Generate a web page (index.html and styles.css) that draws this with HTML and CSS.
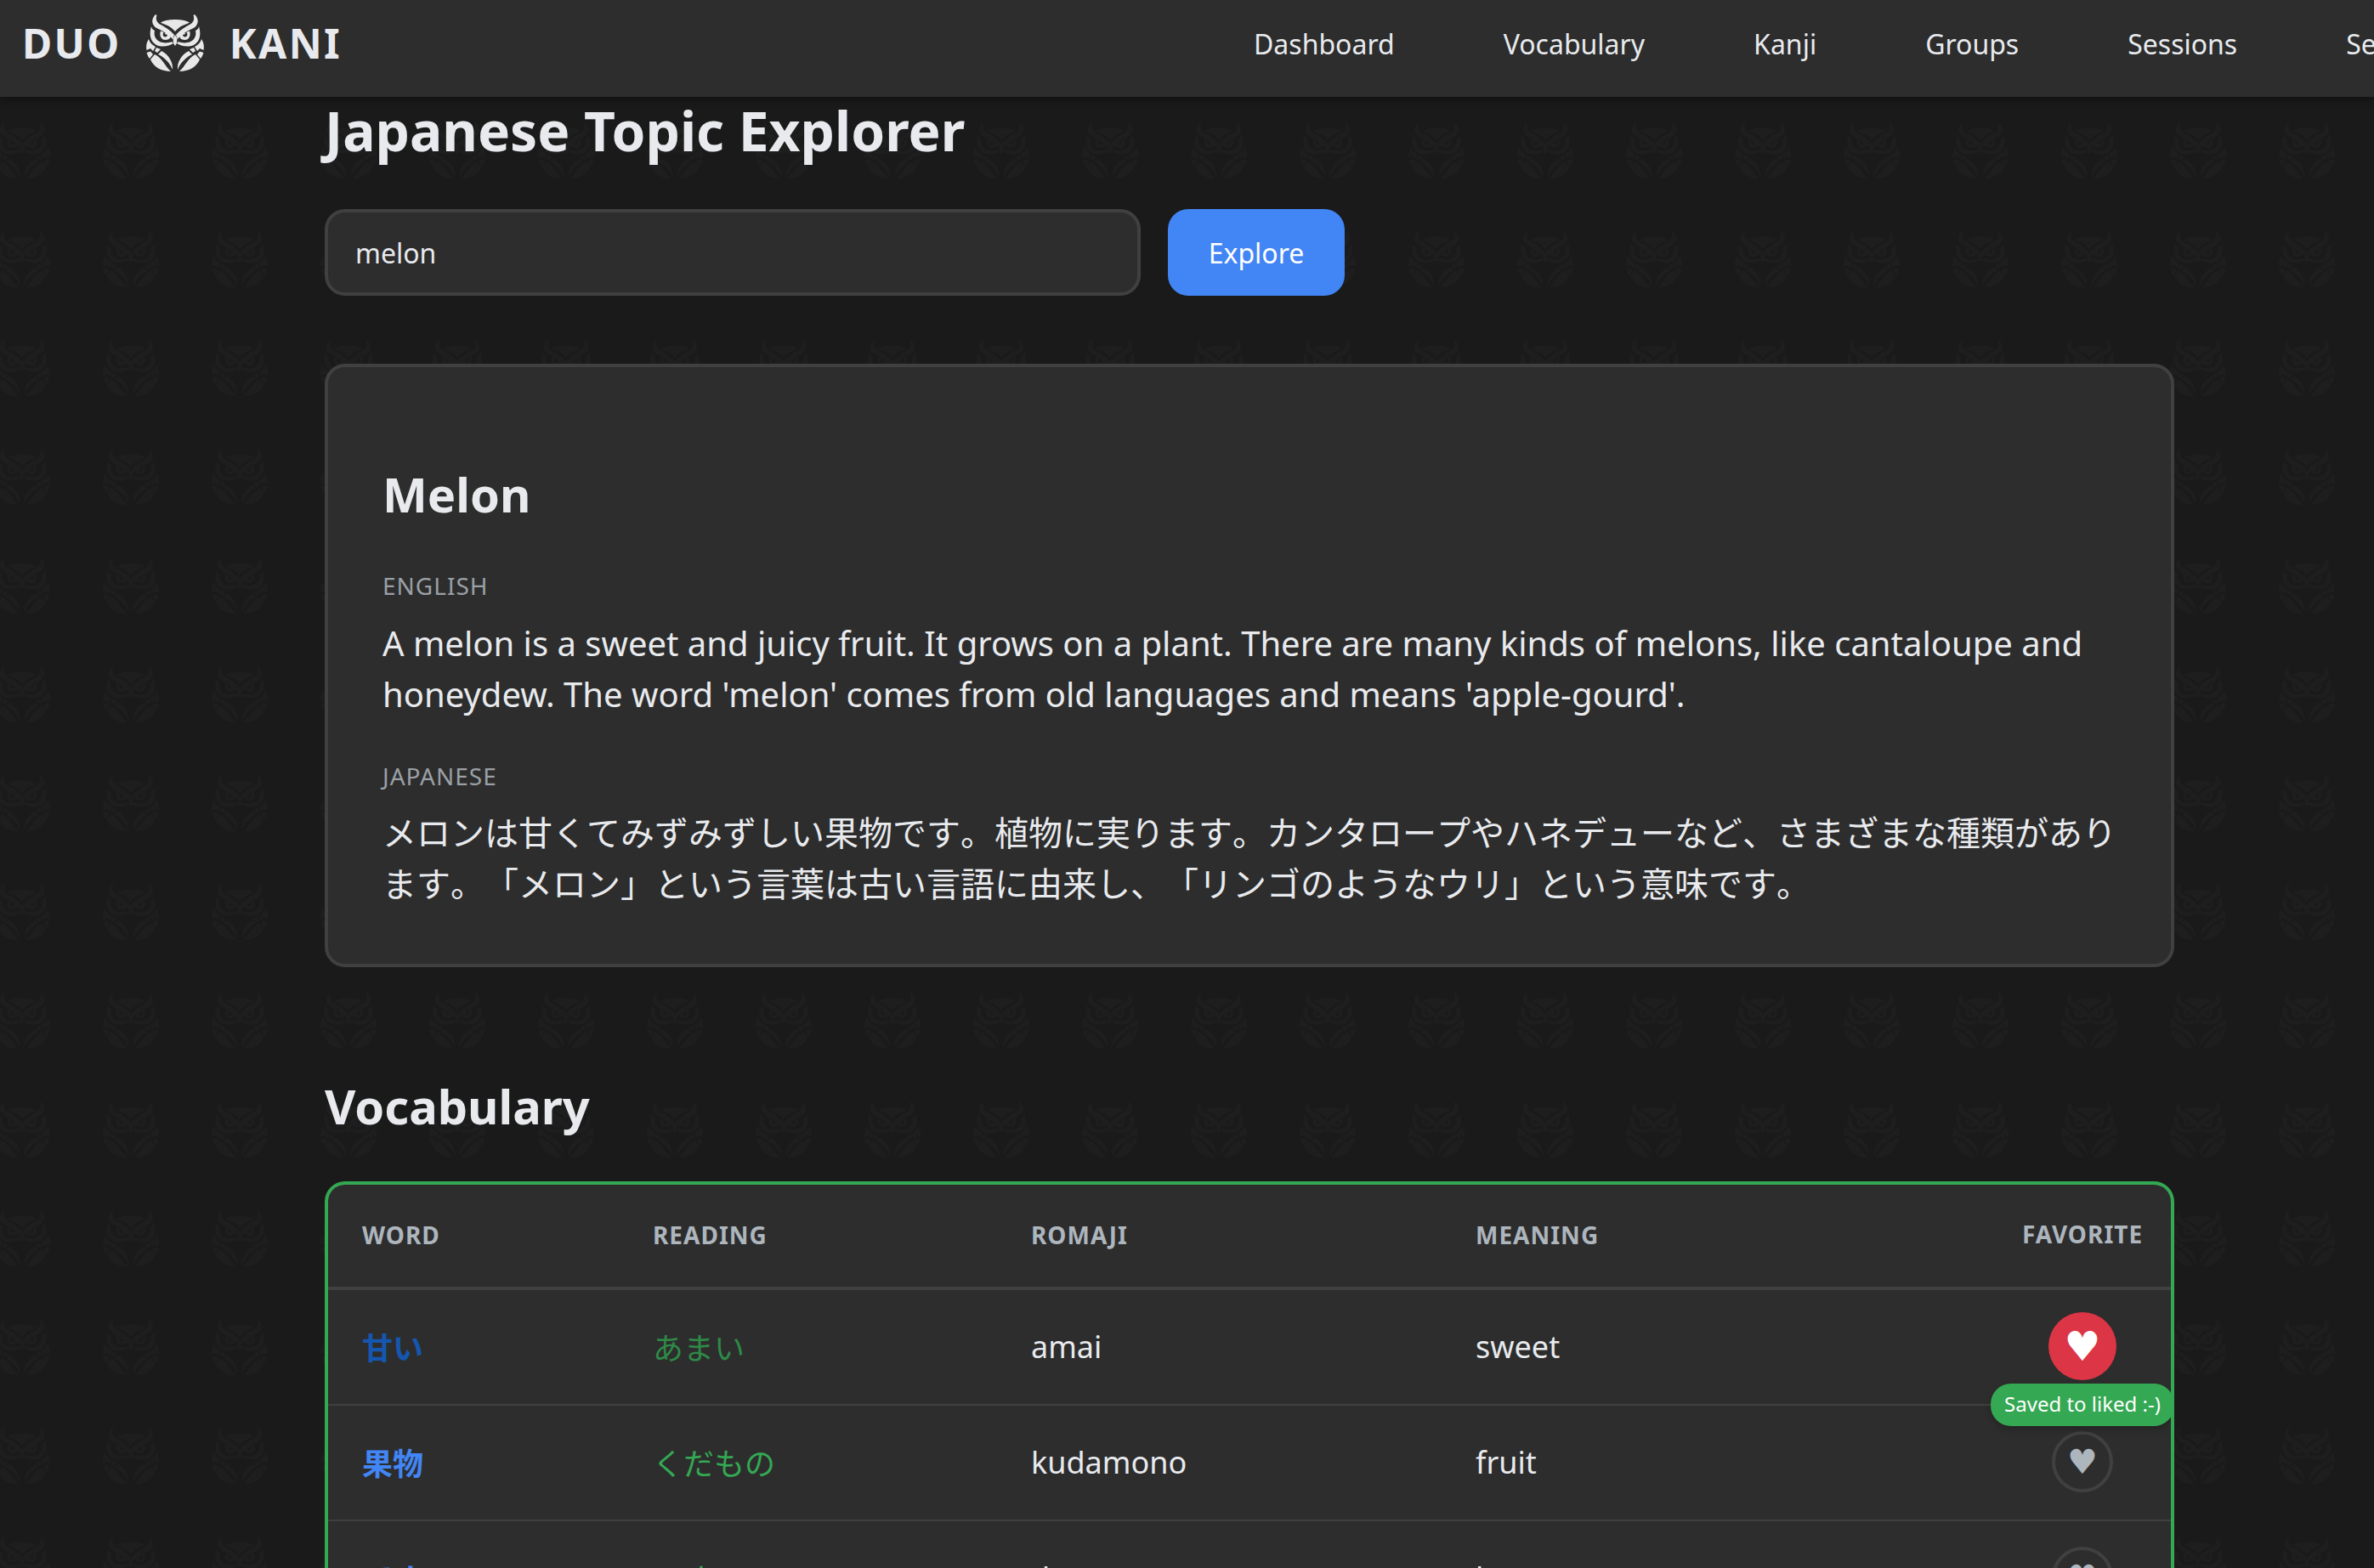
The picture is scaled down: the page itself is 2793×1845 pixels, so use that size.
FILE: index.html
```html
<!DOCTYPE html>
<html lang="ja">
<head>
<meta charset="utf-8">
<title>Duo Kani</title>
<link rel="stylesheet" href="styles.css">
</head>
<body>
<svg class="backdrop" aria-hidden="true">
  <defs>
    <symbol id="owl" viewBox="0 0 68 68">
      <g id="owl-half">
        <path d="M11 0C7 4 6 9 9 13C12 18 22 18 31 29L33 24C29 19 21 14 16 11.500C12 9 11 5 12.500 1Z"/>
        <path d="M17 9.500C22 6.500 29 6 34.100 6V20L31 17C27 13 22 12 17 9.500Z"/>
        <path d="M6 14C3 24 5 32 12 36C19 39 28 37 32 34L30 32C23 35 15 33 12 29C9 25 9.500 22 10 19C8 18 6.500 17 6 14Z"/>
        <path d="M17 19.500C15 25 18 30 22.500 30C27 30 29.500 27 29 24L26.500 22C25 20 22 21 22 23L25 24C25 26.500 21 27.500 20 25C19 23 20 21.500 21 21Z"/>
        <path d="M34.100 24L31.500 28L32 34L34.100 37Z"/>
        <path d="M3 29C-.5 34 0 39 .5 42L5 40L8 43L11 38C7 36 4 33 3 29Z"/>
        <path d="M.5 45C1.500 48 2.500 50 4 52L8 47L5 43.500ZM12 39L10 43L13 45L17 41Z"/>
        <path d="M18 43L14 47C21 50 28 57 31 65C32 56 26 47 18 43ZM10 47L5 53C9 62 18 67 29 67C22 61 19 51 10 47Z"/>
      </g>
      <use href="#owl-half" transform="translate(68 0) scale(-1 1)"/>
    </symbol>
    <pattern id="owls" width="128" height="128" patternUnits="userSpaceOnUse" x="-38" y="114">
      <use href="#owl" x="31" y="31" width="66" height="66"/>
    </pattern>
  </defs>
  <rect width="100%" height="100%" fill="url(#owls)"/>
</svg>
<header class="navbar">
  <a class="brand"><span>DUO</span><svg class="brand-icon"><use href="#owl"/></svg><span>KANI</span></a>
  <nav class="links"><a>Dashboard</a><a>Vocabulary</a><a>Kanji</a><a>Groups</a><a>Sessions</a><a>Settings</a></nav>
</header>
<main class="page">
  <h1>Japanese Topic Explorer</h1>
  <form class="search"><input type="text" value="melon"><button type="button">Explore</button></form>
  <section class="card">
    <h2>Melon</h2>
    <div class="label">ENGLISH</div>
    <p>A melon is a sweet and juicy fruit. It grows on a plant. There are many kinds of melons, like cantaloupe and honeydew. The word 'melon' comes from old languages and means 'apple-gourd'.</p>
    <div class="label">JAPANESE</div>
    <p class="japanese">メロンは甘くてみずみずしい果物です。植物に実ります。カンタロープやハネデューなど、さまざまな種類があります。「メロン」という言葉は古い言語に由来し、「リンゴのようなウリ」という意味です。</p>
  </section>
  <h2 class="section-title">Vocabulary</h2>
  <div class="table">
    <div class="row head"><span>WORD</span><span>READING</span><span>ROMAJI</span><span>MEANING</span><span class="fav">FAVORITE</span></div>
    <div class="row hovered"><span class="word">甘い</span><span class="reading">あまい</span><span>amai</span><span>sweet</span><span class="fav"><button class="heart liked">♥</button><span class="toast">Saved to liked :-)</span></span></div>
    <div class="row"><span class="word">果物</span><span class="reading">くだもの</span><span>kudamono</span><span>fruit</span><span class="fav"><button class="heart">♥</button></span></div>
    <div class="row"><span class="word">です</span><span class="reading">です</span><span>desu</span><span>be</span><span class="fav"><button class="heart">♥</button></span></div>
  </div>
</main>
</body>
</html>
```
FILE: styles.css
```css
* { box-sizing: border-box; }
html { height: 1845px; overflow: hidden; }
body {
  margin: 0;
  height: 1845px;
  overflow: hidden;
  background: #1a1a1a;
  color: #e8eaed;
  font: 32px/1.5 "Noto Sans", "Noto Sans CJK JP", sans-serif;
}
.backdrop { position: absolute; inset: 0; width: 100%; height: 100%; z-index: -1; fill: #1e1e1e; }
.navbar {
  position: relative;
  display: flex;
  justify-content: space-between;
  height: 114px;
  padding: 0 0 0 26px;
  background: #2d2d2d;
  box-shadow: 0 4px 8px rgba(0, 0, 0, .3);
}
.brand { display: flex; align-items: center; height: 102px; gap: 29.6px; font-size: 48px; font-weight: 700; letter-spacing: 2.4px; }
.brand span { padding-bottom: 1px; }
.brand-icon { width: 68px; height: 68px; fill: #e8e8e8; }
.links { display: flex; align-items: center; width: 1318px; height: 104px; gap: 128px; overflow: hidden; white-space: nowrap; }
.page { width: 2176px; margin-left: 382px; }
h1 { margin: 0; font-size: 64px; line-height: 80px; }
h2 { margin: 0; font-size: 56px; line-height: 84px; }
.search { display: flex; gap: 32px; margin-top: 52px; }
input, button { font: inherit; color: inherit; }
input { width: 960px; height: 102px; padding: 0 32px; border: 4px solid #404040; border-radius: 24px; background: #2d2d2d; outline: 0; }
.search button { width: 208px; height: 102px; padding-top: 3px; border: 0; border-radius: 24px; background: #4285f4; color: #fff; }
.card { height: 710px; margin-top: 80px; padding: 107px 64px 0; border: 4px solid #404040; border-radius: 24px; background: #2d2d2d; }
.label { margin-top: 45px; color: #9aa0a6; font-size: 28px; line-height: 42px; letter-spacing: 1px; }
.card p { margin: 17px 0 0; font-size: 40px; line-height: 60px; }
.card .japanese { margin-top: 16px; font-kerning: none; text-spacing-trim: space-all; }
.section-title { margin-top: 121px; }
.table { height: 455px; margin-top: 47px; border: 4px solid #34a853; border-bottom: 0; border-radius: 24px 24px 0 0; background: #2d2d2d; overflow: hidden; font-size: 36px; }
.row { display: grid; grid-template-columns: 342px 445px 523px 1fr 208px; align-items: center; height: 136px; padding-left: 40px; border-bottom: 2px solid #404040; }
.head { height: 124px; padding-bottom: 2px; border-bottom-width: 4px; color: #adb5bd; font-size: 28px; font-weight: 700; letter-spacing: 1px; }
.word, .reading { padding-top: 4px; }
.word { color: #4285f4; font-weight: 700; }
.reading { color: #34a853; }
.hovered .word { color: #1557b0; }
.hovered .reading { color: #2d8a47; }
.fav { position: relative; display: flex; justify-content: center; padding-bottom: 2px; }
.heart { display: flex; align-items: center; justify-content: center; width: 72px; height: 72px; padding: 0; border: 4px solid #404040; border-radius: 50%; background: none; color: #adb5bd; font-family: "DejaVu Sans", sans-serif; font-size: 40px; line-height: 1; }
.liked { width: 80px; height: 80px; border: 0; background: #dc3545; color: #fff; font-size: 48px; }
.toast { position: absolute; top: 84px; left: -4px; z-index: 1; width: 216px; height: 50px; border-radius: 24px; background: #34a853; color: #fff; font-size: 24px; line-height: 48px; text-align: center; box-shadow: 0 4px 8px rgba(0, 0, 0, .2); white-space: nowrap; }
```
